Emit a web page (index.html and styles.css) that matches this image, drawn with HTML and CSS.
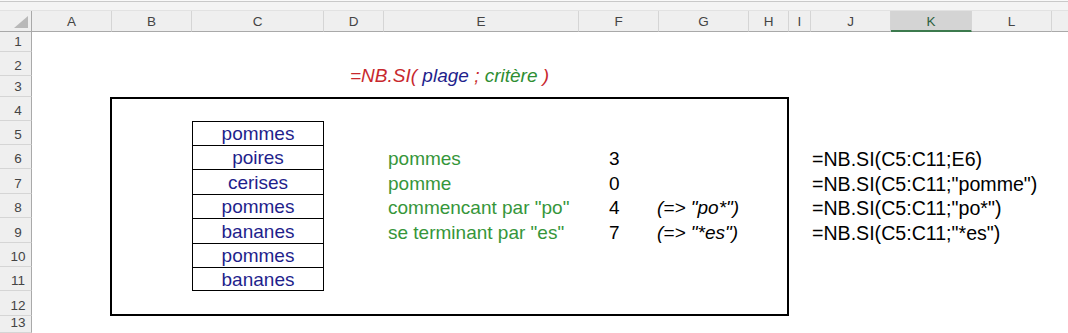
FILE: index.html
```html
<!DOCTYPE html>
<html lang="fr">
<head>
<meta charset="utf-8">
<title>NB.SI</title>
<link rel="stylesheet" href="styles.css">
</head>
<body>
<div class="sheet">
  <div class="strip"></div>

  <div class="corner">
    <svg class="corner-tri" width="14" height="12" viewBox="0 0 14 12"><polygon points="14,0 14,12 0,12" fill="#b9b9b9"/></svg>
  </div>
  <div class="ch c-a">A</div>
  <div class="ch c-b">B</div>
  <div class="ch c-c">C</div>
  <div class="ch c-d">D</div>
  <div class="ch c-e">E</div>
  <div class="ch c-f">F</div>
  <div class="ch c-g">G</div>
  <div class="ch c-h">H</div>
  <div class="ch c-i">I</div>
  <div class="ch c-j">J</div>
  <div class="ch c-k ch-sel">K</div>
  <div class="ch c-l">L</div>
  <div class="ch c-m"></div>

  <div class="rh r-1">1</div>
  <div class="rh r-2">2</div>
  <div class="rh r-3">3</div>
  <div class="rh r-4">4</div>
  <div class="rh r-5">5</div>
  <div class="rh r-6">6</div>
  <div class="rh r-7">7</div>
  <div class="rh r-8">8</div>
  <div class="rh r-9">9</div>
  <div class="rh r-10">10</div>
  <div class="rh r-11">11</div>
  <div class="rh r-12">12</div>
  <div class="rh r-13">13</div>

  <div class="body-bg"></div>

  <div class="title"><span class="red">=NB.SI(</span> <span class="navy">plage</span> <span class="red">;</span> <span class="green">critère</span> <span class="red">)</span></div>

  <div class="frame"></div>

  <div class="cell data c-c r-5">pommes</div>
  <div class="cell data c-c r-6">poires</div>
  <div class="cell data c-c r-7">cerises</div>
  <div class="cell data c-c r-8">pommes</div>
  <div class="cell data c-c r-9">bananes</div>
  <div class="cell data c-c r-10">pommes</div>
  <div class="cell data data-last c-c r-11">bananes</div>

  <div class="cell crit c-e r-6">pommes</div>
  <div class="cell crit c-e r-7">pomme</div>
  <div class="cell crit c-e r-8">commencant par "po"</div>
  <div class="cell crit c-e r-9">se terminant par "es"</div>

  <div class="cell num c-f r-6">3</div>
  <div class="cell num c-f r-7">0</div>
  <div class="cell num c-f r-8">4</div>
  <div class="cell num c-f r-9">7</div>

  <div class="cell note c-g r-8">(=&gt; "po*")</div>
  <div class="cell note c-g r-9">(=&gt; "*es")</div>

  <div class="cell fx c-j r-6">=NB.SI(C5:C11;E6)</div>
  <div class="cell fx c-j r-7">=NB.SI(C5:C11;"pomme")</div>
  <div class="cell fx c-j r-8">=NB.SI(C5:C11;"po*")</div>
  <div class="cell fx c-j r-9">=NB.SI(C5:C11;"*es")</div>
</div>
</body>
</html>
```

FILE: styles.css
```css
html, body {
  margin: 0;
  padding: 0;
  background: #ffffff;
  overflow: hidden;
}

.sheet {
  width: 1068px;
  height: 333px;
  display: grid;
  grid-template-columns: 32px 80px 80px 132px 60px 195px 80px 90px 40px 22px 80px 81px 80px 16px;
  grid-template-rows: 11px 21px 20px 24px 21px 24px 24px 24px 25px 24px 25px 24px 24px 25px 17px;
  font-family: "Liberation Sans", Arial, sans-serif;
  font-size: 19px;
  overflow: hidden;
}

/* top strip */
.strip {
  grid-column: 1 / -1;
  grid-row: 1;
  background: #f4f4f4;
  border-top: 1px solid #f9f9f9;
  border-bottom: 1px solid #e2e2e2;
  box-shadow: inset 0 3px 0 -2px #c9c9c9;
}

/* column header */
.corner {
  grid-column: 1;
  grid-row: 2;
  background: #efefef;
  border-right: 1px solid #a9a9a9;
  border-bottom: 1px solid #a9a9a9;
  display: flex;
  align-items: flex-end;
  justify-content: flex-end;
  padding: 0 3px 3px 0;
}
.corner-tri { display: block; }

.ch {
  grid-row: 2;
  background: #efefef;
  border-right: 1px solid #d5d5d5;
  border-bottom: 1px solid #a9a9a9;
  display: flex;
  align-items: center;
  justify-content: center;
  font-family: "Liberation Sans", Arial, sans-serif;
  font-size: 13.5px;
  color: #444444;
  padding-top: 1px;
}
.ch-sel {
  background: #d4d4d4;
  color: #2c5f3f;
  border-bottom: 2px solid #3c7a4e;
}
.c-m { border-right: none; }

/* row header */
.rh {
  grid-column: 1;
  background: #efefef;
  border-right: 1px solid #a9a9a9;
  border-bottom: 1px solid #d5d5d5;
  display: flex;
  align-items: flex-end;
  justify-content: center;
  padding: 0 0 2px 5px;
  font-family: "Liberation Sans", Arial, sans-serif;
  font-size: 13.5px;
  line-height: 15px;
  color: #444444;
}

.body-bg {
  grid-column: 2 / -1;
  grid-row: 3 / -1;
  background: #ffffff;
}

/* column placement */
.c-a { grid-column: 2; }
.c-b { grid-column: 3; }
.c-c { grid-column: 4; }
.c-d { grid-column: 5; }
.c-e { grid-column: 6; }
.c-f { grid-column: 7; }
.c-g { grid-column: 8; }
.c-h { grid-column: 9; }
.c-i { grid-column: 10; }
.c-j { grid-column: 11; }
.c-k { grid-column: 12; }
.c-l { grid-column: 13; }
.c-m { grid-column: 14; }

/* row placement */
.r-1 { grid-row: 3; }
.r-2 { grid-row: 4; }
.r-3 { grid-row: 5; }
.r-4 { grid-row: 6; }
.r-5 { grid-row: 7; }
.r-6 { grid-row: 8; }
.r-7 { grid-row: 9; }
.r-8 { grid-row: 10; }
.r-9 { grid-row: 11; }
.r-10 { grid-row: 12; }
.r-11 { grid-row: 13; }
.r-12 { grid-row: 14; }
.r-13 { grid-row: 15; }

/* title */
.title {
  grid-column: 5 / 9;
  grid-row: 4 / 6;
  align-self: center;
  padding: 3px 0 0 26px;
  line-height: 20px;
  font-style: italic;
  white-space: pre;
}
.red { color: #c8282e; }
.navy { color: #1f1f8c; }
.green { color: #2e8e32; }

/* big frame */
.frame {
  grid-column: 3 / 10;
  grid-row: 6 / 15;
  margin-left: -2px;
  border: 2px solid #000000;
}

/* cells */
.cell {
  display: flex;
  align-items: flex-end;
  line-height: 20px;
  white-space: nowrap;
}

.data {
  justify-content: center;
  color: #1f1f8c;
  border: 1px solid #000000;
  border-bottom: none;
  padding-bottom: 1px;
}
.data-last { border-bottom: 1px solid #000000; padding-bottom: 0; }

.crit {
  color: #36963a;
  padding-left: 4px;
}

.num {
  color: #000000;
  padding-left: 30px;
}

.note {
  color: #000000;
  font-style: italic;
  margin-left: -2px;
}

.fx {
  color: #000000;
  padding-left: 1px;
  font-size: 19.6px;
}
```
